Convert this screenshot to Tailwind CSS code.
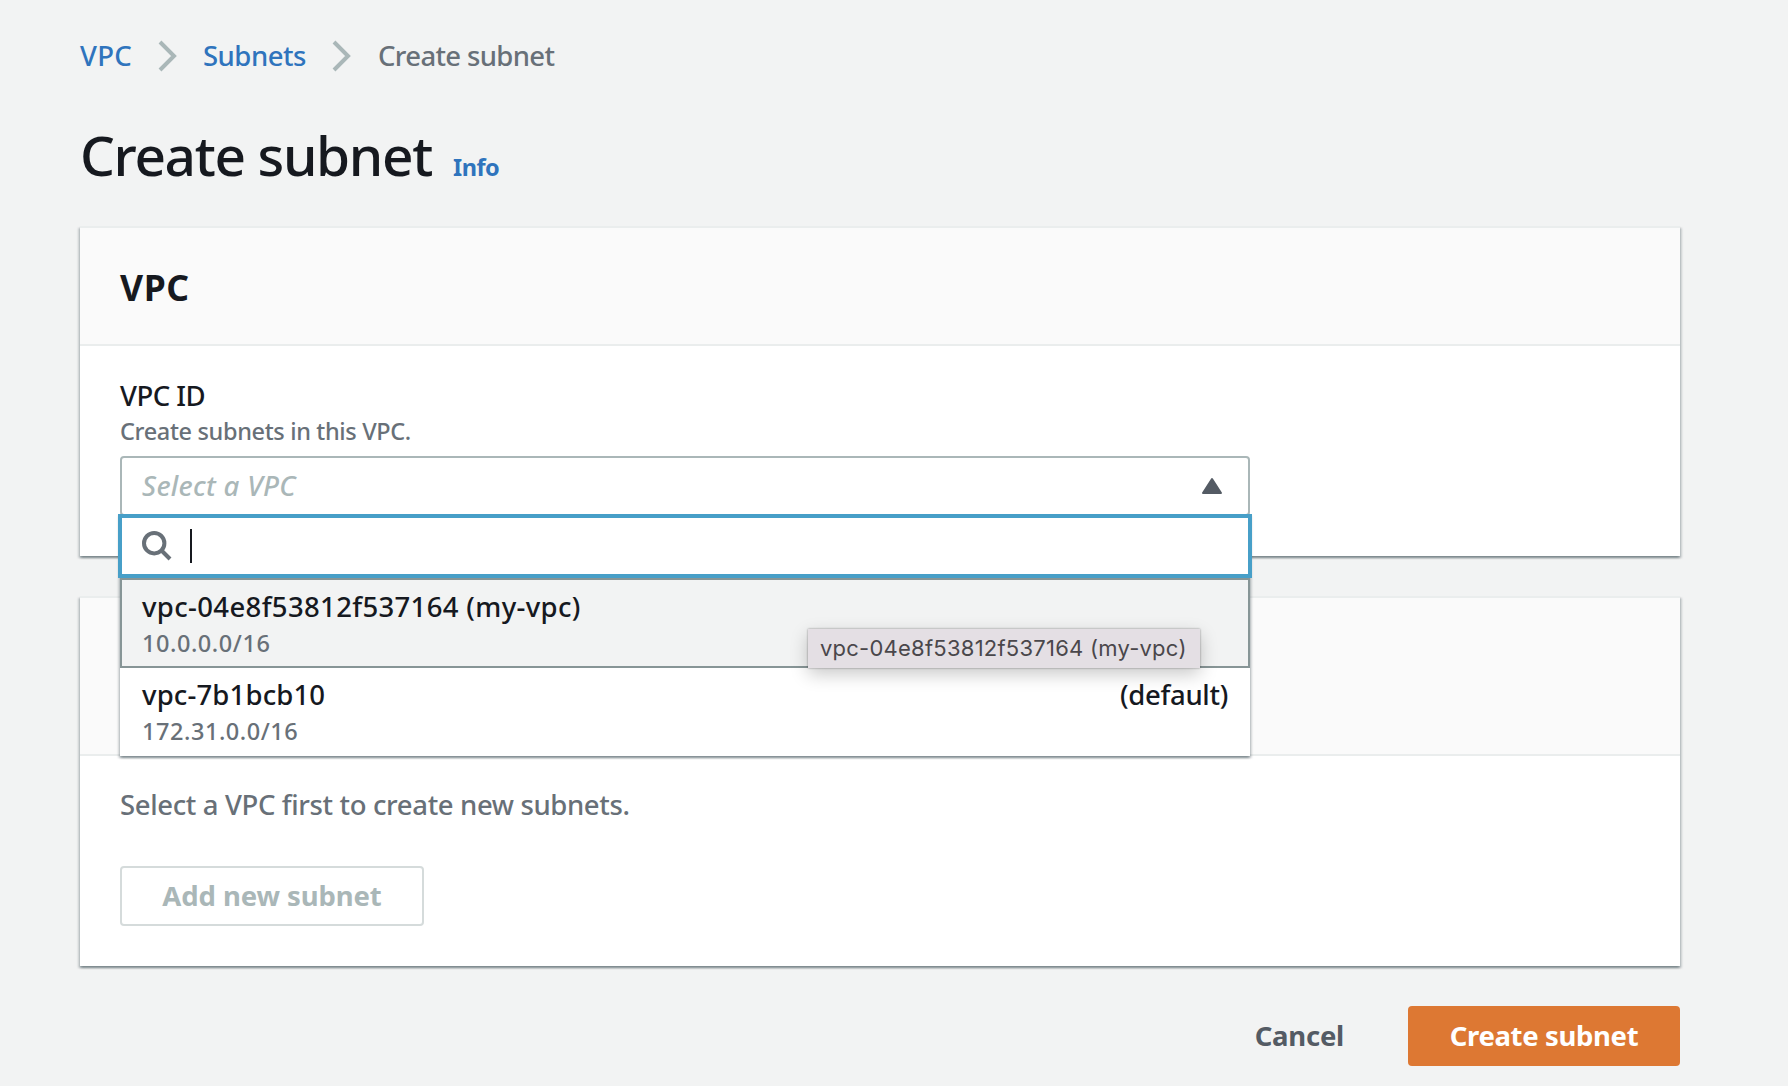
<!DOCTYPE html>
<html lang="en">
<head>
<meta charset="utf-8">
<title>Create subnet</title>
<script src="https://cdn.jsdelivr.net/npm/@tailwindcss/browser@4"></script>
</head>
<body class="h-[1086px] overflow-hidden bg-[#f2f3f3] font-['Noto_Sans',sans-serif] text-[27.5px] leading-10 font-medium text-[#16191f]">
<main class="ml-20 w-[1600px] pt-[36px]">
  <nav class="flex h-10 items-center whitespace-nowrap">
    <a class="w-[53px] tracking-[0.3px] text-[#2f74bd]">VPC</a>
    <svg class="ml-[25px] h-[32px] w-[19px] shrink-0" viewBox="0 0 19 32" fill="none" stroke="#aab7b8" stroke-width="4"><path d="M2 2 16 16 2 30"/></svg>
    <a class="ml-[26px] w-[103px] tracking-[-0.5px] text-[#2f74bd]">Subnets</a>
    <svg class="ml-[26px] h-[32px] w-[19px] shrink-0" viewBox="0 0 19 32" fill="none" stroke="#aab7b8" stroke-width="4"><path d="M2 2 16 16 2 30"/></svg>
    <span class="ml-[27px] tracking-[-0.65px] text-[#687078]">Create subnet</span>
  </nav>
  <div class="mt-[43px] flex h-[72px] items-baseline whitespace-nowrap">
    <h1 class="w-[373px] text-[55px] leading-[72px] tracking-[-1.35px]">Create subnet</h1>
    <a class="text-[23.5px] font-bold tracking-[-0.5px] text-[#2f74bd]">Info</a>
  </div>

  <section class="mt-[35px] border-t-2 border-[#eaeded] bg-white shadow-[0_2px_2px_0_rgba(0,28,36,0.3),2px_2px_2px_0_rgba(0,28,36,0.15),-2px_2px_2px_0_rgba(0,28,36,0.15)]">
    <header class="flex h-[118px] items-center border-b-2 border-[#eaeded] bg-[#fafafa] px-10 pt-0.5">
      <h2 class="text-[35.5px] font-bold tracking-[0.6px]">VPC</h2>
    </header>
    <div class="px-10 pt-[30px] pb-10">
      <label class="block tracking-[-0.5px]">VPC ID</label>
      <p class="-mt-px text-[23.5px] leading-8 tracking-[-0.35px] text-[#687078]">Create subnets in this VPC.</p>
      <div class="relative mt-[9px] w-[1130px]">
        <div class="flex h-[60px] items-center justify-between rounded-[4px] border-2 border-[#aab7b8] bg-white pr-[25px] pb-px pl-5">
          <span class="tracking-[0.3px] italic text-[#aab7b8]">Select a VPC</span>
          <svg class="h-5 w-[22px]" viewBox="0 0 22 20"><path d="M11 3 20 17H2Z" fill="#545b64" stroke="#545b64" stroke-width="2" stroke-linejoin="round"/></svg>
        </div>
        <div class="absolute top-[58px] left-0 z-10 w-[1130px] bg-white shadow-[0_2px_2px_0_rgba(0,28,36,0.3),2px_2px_2px_0_rgba(0,28,36,0.15),-2px_2px_2px_0_rgba(0,28,36,0.15)]">
          <div class="-mx-0.5 flex h-16 items-center border-4 border-[#479fc8] bg-white pl-5">
            <svg class="h-[30px] w-[30px]" viewBox="0 0 30 30" fill="none" stroke="#687078" stroke-width="4"><circle cx="12.2" cy="12.2" r="10.2"/><path d="M19.5 19.5 28 28"/></svg>
            <span class="ml-[18px] h-[34px] w-0.5 bg-[#16191f]"></span>
          </div>
          <div class="h-[90px] whitespace-nowrap border-2 border-[#879596] bg-[#f2f3f3] px-5 pt-[7px]">
            <div class="tracking-[0.35px]">vpc-04e8f53812f537164 (my-vpc)</div>
            <div class="text-[23.5px] leading-8 tracking-[0.55px] text-[#687078]">10.0.0.0/16</div>
          </div>
          <div class="h-[88px] px-[22px] pt-[7px]">
            <div class="flex justify-between"><span class="tracking-[0.15px]">vpc-7b1bcb10</span><span class="tracking-[-0.3px]">(default)</span></div>
            <div class="text-[23.5px] leading-8 tracking-[0.55px] text-[#687078]">172.31.0.0/16</div>
          </div>
          <div class="absolute top-[115px] left-[688px] flex h-[39px] w-[392px] items-center whitespace-nowrap bg-[#e4dfe4] pb-px pl-3 font-['Inter',sans-serif] text-[22px] font-normal tracking-[0.24px] text-[#4a474b] shadow-[0_0_2px_rgba(0,0,0,0.4),0_6px_18px_rgba(0,0,0,0.22)]">vpc-04e8f53812f537164 (my-vpc)</div>
        </div>
      </div>
    </div>
  </section>

  <section class="mt-10 border-t-2 border-[#eaeded] bg-white shadow-[0_2px_2px_0_rgba(0,28,36,0.3),2px_2px_2px_0_rgba(0,28,36,0.15),-2px_2px_2px_0_rgba(0,28,36,0.15)]">
    <header class="h-[158px] border-b-2 border-[#eaeded] bg-[#fafafa]"></header>
    <div class="px-10 pt-[29px] pb-10">
      <p class="whitespace-nowrap tracking-[-0.36px] text-[#687078]">Select a VPC first to create new subnets.</p>
      <button class="mt-[41px] flex h-[60px] w-[304px] items-center justify-center whitespace-nowrap rounded-[4px] border-2 border-[#d5dbdb] pb-px font-bold tracking-[-0.1px] text-[#aab7b8]">Add new subnet</button>
    </div>
  </section>

  <div class="mt-10 flex h-[60px] items-center justify-end gap-16 whitespace-nowrap font-bold">
    <button class="tracking-[-0.25px] text-[#545b64]">Cancel</button>
    <button class="h-[60px] w-[272px] rounded-[4px] bg-[#dd7833] tracking-[-0.35px] text-white">Create subnet</button>
  </div>
</main>
</body>
</html>
